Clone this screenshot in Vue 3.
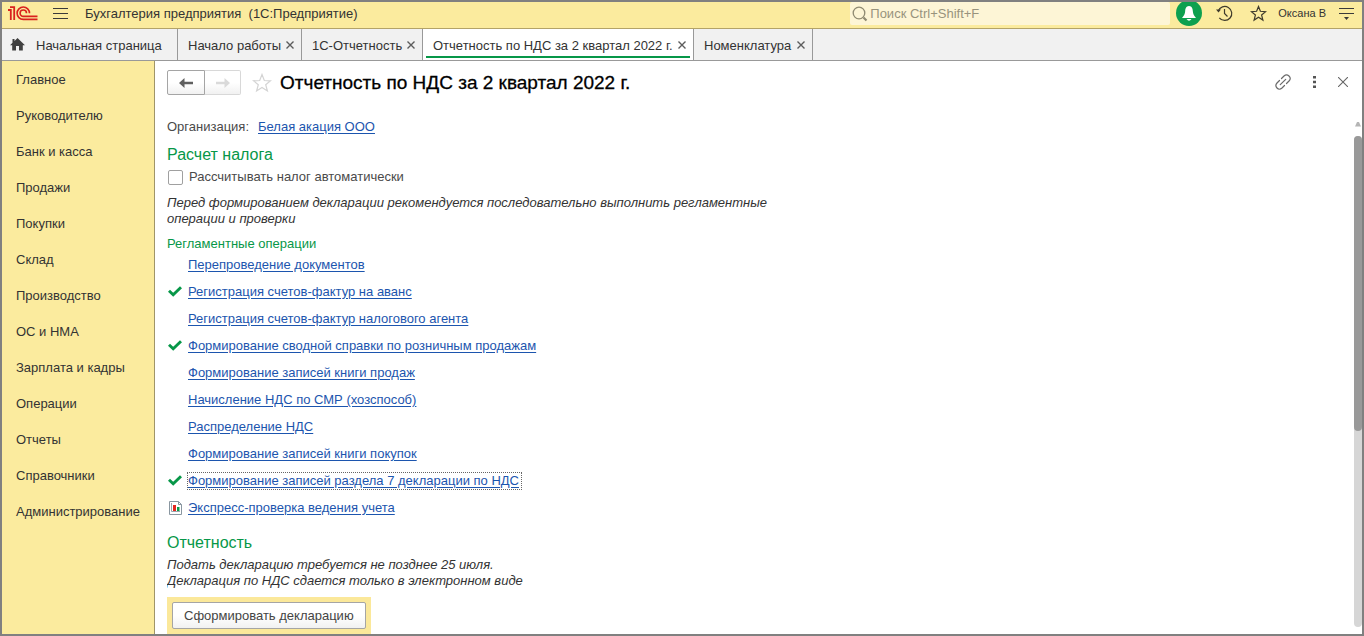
<script setup>
import { ref } from 'vue'

const tabs = [
  { title: 'Начало работы', width: 124 },
  { title: '1С-Отчетность', width: 121 },
  { title: 'Отчетность по НДС за 2 квартал 2022 г.', width: 271, active: true },
  { title: 'Номенклатура', width: 119 },
]

const sections = [
  'Главное', 'Руководителю', 'Банк и касса', 'Продажи', 'Покупки', 'Склад',
  'Производство', 'ОС и НМА', 'Зарплата и кадры', 'Операции', 'Отчеты',
  'Справочники', 'Администрирование',
]

const operations = [
  { title: 'Перепроведение документов' },
  { title: 'Регистрация счетов-фактур на аванс', icon: 'check' },
  { title: 'Регистрация счетов-фактур налогового агента' },
  { title: 'Формирование сводной справки по розничным продажам', icon: 'check' },
  { title: 'Формирование записей книги продаж' },
  { title: 'Начисление НДС по СМР (хозспособ)' },
  { title: 'Распределение НДС' },
  { title: 'Формирование записей книги покупок' },
  { title: 'Формирование записей раздела 7 декларации по НДС', icon: 'check', focused: true },
  { title: 'Экспресс-проверка ведения учета', icon: 'report' },
]

const auto = ref(false)
const query = ref('')
</script>

<template>
  <div class="window">
    <header class="topbar">
      <svg class="logo" width="30" height="16" viewBox="0 0 30 16" fill="none" stroke="#d9211e">
        <path d="M0 5H2.800V15M2 2.200H6.200V15" stroke-width="1.800" />
        <path d="M21.500 8.200A6.200 6.200 0 1 0 15.300 14.400H29.500" stroke-width="1.600" />
        <path d="M18.500 8.200A3.200 3.200 0 1 0 15.300 11.400H29.500" stroke-width="1.600" />
      </svg>
      <button class="icon-btn menu" aria-label="Меню">
        <svg width="15" height="12" viewBox="0 0 15 12" stroke="#3a3a3a"><path d="M0 1.500H15M0 6.500H15M0 11.500H15" /></svg>
      </button>
      <span class="app-title">Бухгалтерия предприятия &nbsp;(1С:Предприятие)</span>
      <label class="search">
        <svg width="17" height="17" viewBox="0 0 17 17" fill="none" stroke="#8f8a72">
          <circle cx="7" cy="8" r="5.800" stroke-width="1.300" /><path d="m11.500 12.500 3 3" stroke-width="2.200" />
        </svg>
        <input v-model="query" type="text" placeholder="Поиск Ctrl+Shift+F" aria-label="Поиск" />
      </label>
      <button class="icon-btn bell" aria-label="Уведомления">
        <svg width="26" height="26" viewBox="0 0 26 26">
          <circle cx="13" cy="13" r="13" fill="#0da04f" />
          <path d="M13 6C10 6.300 9.300 8.500 9.200 11 9 14 8 15.500 6 18H20C18 15.500 17 14 16.800 11 16.700 8.500 16 6.300 13 6Z" fill="#fff" />
          <path d="M10.500 19H15.500Q13 22.500 10.500 19Z" fill="#fff" />
        </svg>
      </button>
      <button class="icon-btn history" aria-label="История">
        <svg width="17" height="17" viewBox="0 0 17 17" fill="none" stroke="#3f3b2c" stroke-width="1.200">
          <path d="M2.200 6A7 7 0 1 1 3.300 12.800M8.500 4V8.500L11.500 11.500" /><path d="M0 4.500H5L2.500 7.500Z" fill="#3f3b2c" stroke="none" />
        </svg>
      </button>
      <button class="icon-btn favorites" aria-label="Избранное">
        <svg width="17" height="17" viewBox="0 0 17 17" fill="none" stroke="#3f3b2c" stroke-width="1.200">
          <path d="M8.500 1.500 10.400 6.300 15.600 6.700 11.600 10 12.900 15.100 8.500 12.300 4.100 15.100 5.400 10 1.400 6.700 6.600 6.300Z" />
        </svg>
      </button>
      <span class="user">Оксана В</span>
      <button class="icon-btn options" aria-label="Настройки">
        <svg width="15" height="14" viewBox="0 0 15 14"><path d="M0 2.500H15M0 7.500H15" stroke="#3a3a3a" /><path d="M5 11H10L7.500 14Z" fill="#3a3a3a" /></svg>
      </button>
    </header>

    <nav class="tabs" aria-label="Открытые окна">
      <a class="tab home" href="#">
        <svg width="15" height="13" viewBox="0 0 15 13" fill="#404040"><path d="M7.500 0 15 7.200H12.800V12.500H9V8H6V12.500H2.200V7.200H0L2.500 4.800V1H4.500V2.900Z" /></svg>
        <span class="tab-title">Начальная страница</span>
      </a>
      <div v-for="tab in tabs" :key="tab.title" class="tab" :class="{ active: tab.active }" :style="{ width: tab.width + 'px' }">
        <a class="tab-title" href="#">{{ tab.title }}</a>
        <button class="icon-btn" aria-label="Закрыть вкладку">
          <svg width="8" height="8" viewBox="0 0 8 8" stroke="#5c5c5c" stroke-width="1.400"><path d="M.5.5 7.500 7.500M7.500.5.5 7.500" /></svg>
        </button>
      </div>
    </nav>

    <div class="body">
      <nav class="sidebar" aria-label="Разделы">
        <a v-for="s in sections" :key="s" href="#">{{ s }}</a>
      </nav>

      <main class="page">
        <div class="page-head">
          <div class="nav-buttons">
            <button class="back" aria-label="Назад">
              <svg width="14" height="10" viewBox="0 0 14 10" fill="#5f5f5f"><path d="M0 5 5.500 0V3.700H14V6.300H5.500V10Z" /></svg>
            </button>
            <button class="forward" aria-label="Вперед" disabled>
              <svg width="14" height="10" viewBox="0 0 14 10" fill="#dadada"><path d="M14 5 8.500 0V3.700H0V6.300H8.500V10Z" /></svg>
            </button>
          </div>
          <button class="icon-btn star" aria-label="В избранное">
            <svg width="20" height="20" viewBox="0 0 20 20" fill="none" stroke="#d4d4d4" stroke-width="1.200">
              <path d="M10 1.500 12.300 7.500 18.500 7.800 13.700 11.700 15.400 18 10 14.500 4.600 18 6.300 11.700 1.500 7.800 7.700 7.500Z" />
            </svg>
          </button>
          <h1>Отчетность по НДС за 2 квартал 2022 г.</h1>
          <div class="page-tools">
            <button class="icon-btn" aria-label="Ссылка">
              <svg width="16" height="16" viewBox="0 0 16 16" fill="none" stroke="#6a6a6a" stroke-width="1.200" stroke-linecap="round">
                <path d="M5.300 10.700 10.700 5.300M6.500 4.500 9 2Q11.500-.3 14 2T14 7L11.500 9.500M4.500 6.500 2 9Q-.3 11.500 2 14T7 14L9.500 11.500" />
              </svg>
            </button>
            <button class="icon-btn" aria-label="Еще">
              <svg width="3" height="12" viewBox="0 0 3 12" fill="#555"><path d="M0 0H3V2.500H0ZM0 4.700H3V7.200H0ZM0 9.400H3V11.900H0Z" /></svg>
            </button>
            <button class="icon-btn" aria-label="Закрыть">
              <svg width="10" height="10" viewBox="0 0 10 10" stroke="#666" stroke-width="1.100"><path d="M0 0 10 10M10 0 0 10" /></svg>
            </button>
          </div>
        </div>

        <div class="content">
          <div class="form">
            <p class="org"><span>Организация:</span><a href="#">Белая акация ООО</a></p>
            <h2>Расчет налога</h2>
            <label class="auto"><input v-model="auto" type="checkbox" />Рассчитывать налог автоматически</label>
            <p class="note">Перед формированием декларации рекомендуется последовательно выполнить регламентные операции и проверки</p>
            <h3>Регламентные операции</h3>
            <ul class="operations">
              <li v-for="op in operations" :key="op.title">
                <span class="mark">
                  <svg v-if="op.icon === 'check'" width="14" height="11" viewBox="0 0 14 11" fill="none"><path d="M1 4.800 5.200 8.800 13 1.300" stroke="#079748" stroke-width="2.900" /></svg>
                  <svg v-else-if="op.icon === 'report'" width="13" height="14" viewBox="0 0 13 14">
                    <path d="M.5.5H9.500L12.500 3.500V13.500H.5Z" fill="#fff" stroke="#8996a0" /><path d="M9.500.5V3.500H12.500" fill="none" stroke="#8996a0" />
                    <path d="M2.500 2V10.500H11" fill="none" stroke="#9ba5ad" /><path d="M4 4H7V10H4Z" fill="#e32820" /><path d="M8 6H10.500V10H8Z" fill="#0b9b48" />
                  </svg>
                </span>
                <a href="#" :class="{ focused: op.focused }">{{ op.title }}</a>
              </li>
            </ul>
            <h2 class="reporting">Отчетность</h2>
            <p class="deadline">Подать декларацию требуется не позднее 25 июля.<br />Декларация по НДС сдается только в электронном виде</p>
            <div class="highlight"><button class="submit">Сформировать декларацию</button></div>
          </div>
          <div class="scrollbar" aria-hidden="true">
            <svg width="6" height="5" viewBox="0 0 6 5" fill="#b5b5b5"><path d="M2 0H4L6 4.500H0Z" /></svg>
            <div class="track"><div class="thumb"></div></div>
          </div>
        </div>
      </main>
    </div>
  </div>
</template>

<style>
body {
  margin: 0;
}
</style>

<style scoped>
* {
  box-sizing: border-box;
}

.window {
  display: flex;
  flex-direction: column;
  height: 100vh;
  overflow: hidden;
  border: 2px solid #808080;
  background: #fff;
  color: #333;
  font: 13px/16px "Liberation Sans", Arial, sans-serif;
}

button,
input {
  margin: 0;
  font: inherit;
  color: inherit;
}

svg {
  display: block;
  flex: none;
}

.icon-btn {
  display: flex;
  flex: none;
  padding: 0;
  border: 0;
  background: none;
}

h1,
h2,
h3,
p,
ul {
  margin: 0;
  padding: 0;
  font-weight: normal;
}

.topbar {
  display: flex;
  flex: none;
  align-items: center;
  height: 27px;
  padding: 0 8px 4px 6px;
  overflow: hidden;
  border-bottom: 1px solid #b3a368;
  background: #fbeb9e;
}

.menu {
  margin: 0 17px 0 15px;
}

.app-title,
.tab-title {
  padding-top: 2px;
}

.search {
  display: flex;
  align-items: center;
  gap: 1px;
  width: 320px;
  height: 23px;
  margin: 0 6px 0 auto;
  padding: 0 2px;
  border-radius: 2px;
  background: #fdf5d6;
}

.search input {
  flex: 1;
  min-width: 0;
  padding: 2px 0 0;
  border: 0;
  outline: 0;
  background: none;
}

.search input::placeholder {
  color: #98937d;
  opacity: 1;
}

.history {
  margin-left: 14px;
}

.favorites {
  margin-left: 17px;
}

.user {
  margin: 0 13px 0 11px;
  font-size: 11px;
}

.tabs {
  display: flex;
  flex: none;
  height: 32px;
  border-bottom: 1px solid #999;
  background: #f1f1f1;
}

.tab {
  position: relative;
  display: flex;
  flex: none;
  align-items: center;
  justify-content: space-between;
  padding: 0 7px 0 10px;
  border-right: 1px solid #999;
  color: #333;
  white-space: nowrap;
}

.tab a {
  color: inherit;
  text-decoration: none;
}

.home {
  justify-content: flex-start;
  gap: 11px;
  width: 176px;
  padding: 0 8px;
  text-decoration: none;
}

.active {
  background: #fff;
}

.active::after {
  content: "";
  position: absolute;
  right: 3px;
  bottom: 2px;
  left: 3px;
  height: 2px;
  background: #079748;
}

.body {
  display: flex;
  flex: 1;
  min-height: 0;
}

.sidebar {
  flex: none;
  width: 153px;
  padding-top: 1px;
  border-right: 1px solid #a09568;
  background: #fbeb9e;
}

.sidebar a {
  display: block;
  padding-left: 14px;
  color: #333;
  line-height: 36px;
  text-decoration: none;
}

.page {
  display: flex;
  flex: 1;
  flex-direction: column;
  min-width: 0;
}

.page-head {
  display: flex;
  flex: none;
  align-items: center;
  height: 43px;
  padding: 0 14px 0 12px;
}

.nav-buttons {
  display: flex;
}

.nav-buttons button {
  display: flex;
  align-items: center;
  justify-content: center;
  width: 38px;
  height: 25px;
  padding: 0;
  border: 1px solid #d8d8d8;
  background: linear-gradient(#fff 50%, #f1f1f1);
}

.nav-buttons .back {
  border-color: #a5a5a5;
  border-radius: 2px 0 0 2px;
}

.nav-buttons .forward {
  width: 36px;
  border-left: 0;
  border-radius: 0 2px 2px 0;
}

.star {
  margin: 0 8px 0 11px;
}

h1 {
  color: #000;
  font-size: 19px;
  line-height: 24px;
  -webkit-text-stroke: 0.3px #000;
}

.page-tools {
  display: flex;
  align-items: center;
  gap: 22px;
  margin-left: auto;
  padding-bottom: 2px;
}

.content {
  display: flex;
  flex: 1;
  min-height: 0;
  padding-left: 12px;
}

.form {
  flex: 1;
  min-width: 0;
  padding-top: 15px;
  overflow: hidden;
}

.form a {
  color: #1c55ae;
  text-underline-offset: 2px;
}

.org {
  display: flex;
  gap: 9px;
  color: #4a4a4a;
}

h2 {
  margin-top: 10px;
  color: #079748;
  font-size: 16px;
  line-height: 20px;
}

.auto {
  display: flex;
  align-items: center;
  gap: 6px;
  margin: 4px 0 10px 1px;
  color: #4a4a4a;
}

.auto input {
  appearance: none;
  width: 15px;
  height: 15px;
  border: 1px solid #a0a0a0;
  border-radius: 2px;
  background: #fff;
}

.auto input:checked {
  background: #079748;
}

.note {
  max-width: 620px;
  font-style: italic;
}

h3 {
  margin-top: 9px;
  color: #079748;
  font-size: 13px;
  line-height: 15px;
}

.operations {
  list-style: none;
}

.operations li {
  display: flex;
  align-items: center;
  height: 27px;
}

.mark {
  display: flex;
  justify-content: center;
  width: 16px;
  margin-right: 5px;
}

.focused {
  padding-right: 2px;
  outline: 1px dotted #666;
}

.reporting {
  margin-top: 12px;
}

.deadline {
  margin-top: 4px;
  font-style: italic;
}

.highlight {
  width: fit-content;
  margin-top: 8px;
  padding: 5px;
  background: #fbe89a;
}

.submit {
  height: 27px;
  padding: 0 11px;
  border: 1px solid #a5a5a5;
  border-radius: 2px;
  background: linear-gradient(#fff 50%, #f1f1f1);
  color: #444;
}

.scrollbar {
  display: flex;
  flex: none;
  flex-direction: column;
  align-items: center;
  gap: 9px;
  width: 8px;
  padding: 18px 0 7px;
}

.track {
  flex: 1;
  width: 8px;
  border-radius: 4px;
  background: #d6d6d6;
}

.thumb {
  height: 60%;
  border-radius: 4px;
  background: #999;
}
</style>
